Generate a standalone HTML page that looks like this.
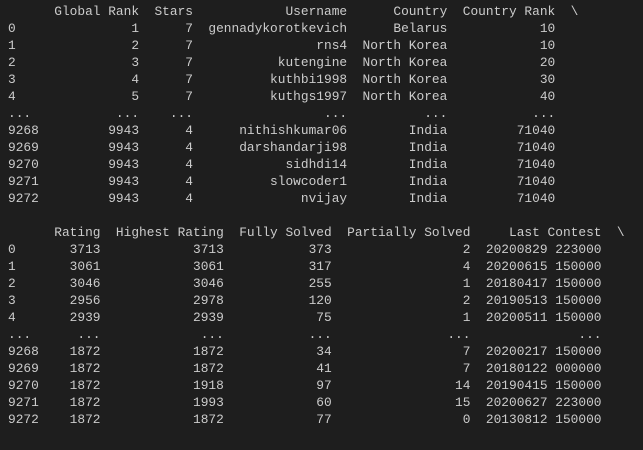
<!DOCTYPE html>
<html><head><style>
html,body{margin:0;padding:0;background:#1e1e1e;width:643px;height:450px;overflow:hidden}
pre{margin:0;padding:3px 0 0 8px;font-family:"Liberation Mono",monospace;font-size:12.85px;line-height:17px;color:#cccccc}
</style></head><body><pre>      Global Rank  Stars            Username      Country  Country Rank  \
0               1      7  gennadykorotkevich      Belarus            10  
1               2      7                rns4  North Korea            10  
2               3      7           kutengine  North Korea            20  
3               4      7          kuthbi1998  North Korea            30  
4               5      7          kuthgs1997  North Korea            40  
...           ...    ...                 ...          ...           ...  
9268         9943      4      nithishkumar06        India         71040  
9269         9943      4      darshandarji98        India         71040  
9270         9943      4            sidhdi14        India         71040  
9271         9943      4          slowcoder1        India         71040  
9272         9943      4              nvijay        India         71040  

      Rating  Highest Rating  Fully Solved  Partially Solved     Last Contest  \
0       3713            3713           373                 2  20200829 223000  
1       3061            3061           317                 4  20200615 150000  
2       3046            3046           255                 1  20180417 150000  
3       2956            2978           120                 2  20190513 150000  
4       2939            2939            75                 1  20200511 150000  
...      ...             ...           ...               ...              ...  
9268    1872            1872            34                 7  20200217 150000  
9269    1872            1872            41                 7  20180122 000000  
9270    1872            1918            97                14  20190415 150000  
9271    1872            1993            60                15  20200627 223000  
9272    1872            1872            77                 0  20130812 150000  </pre></body></html>
